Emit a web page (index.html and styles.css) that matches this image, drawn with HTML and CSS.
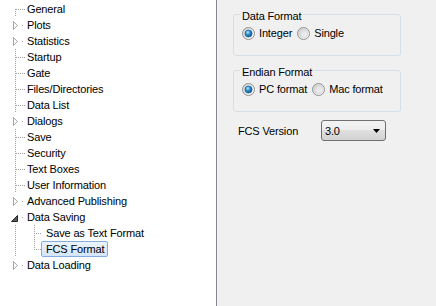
FILE: index.html
```html
<!DOCTYPE html>
<html>
<head>
<meta charset="utf-8">
<link rel="stylesheet" href="styles.css">
</head>
<body>
<svg class="defs" width="0" height="0" aria-hidden="true">
  <defs>
    <linearGradient id="rOuter" x1="0" y1="0" x2="1" y2="1">
      <stop offset="0" stop-color="#d2d2d2"/>
      <stop offset="1" stop-color="#ffffff"/>
    </linearGradient>
    <linearGradient id="rInner" x1="0" y1="0" x2="1" y2="1">
      <stop offset="0" stop-color="#d9d9d9"/>
      <stop offset="1" stop-color="#f7f7f7"/>
    </linearGradient>
    <radialGradient id="rDot" cx="0.4" cy="0.35" r="0.7">
      <stop offset="0" stop-color="#b9e6fb"/>
      <stop offset="0.45" stop-color="#2f8fd2"/>
      <stop offset="1" stop-color="#0d4a7e"/>
    </radialGradient>
    <symbol id="leafFirst" viewBox="0 0 19 16">
      <line x1="9.5" y1="8" x2="9.5" y2="16" stroke="#a0a0a0" stroke-dasharray="1 1"/>
      <line x1="10" y1="8.5" x2="19" y2="8.5" stroke="#a0a0a0" stroke-dasharray="1 1"/>
    </symbol>
    <symbol id="leaf" viewBox="0 0 19 16">
      <line x1="9.5" y1="0" x2="9.5" y2="16" stroke="#a0a0a0" stroke-dasharray="1 1"/>
      <line x1="10" y1="8.5" x2="19" y2="8.5" stroke="#a0a0a0" stroke-dasharray="1 1"/>
    </symbol>
    <symbol id="vline" viewBox="0 0 19 16">
      <line x1="9.5" y1="0" x2="9.5" y2="16" stroke="#a0a0a0" stroke-dasharray="1 1"/>
    </symbol>
    <symbol id="childFirst" viewBox="0 0 19 16">
      <line x1="9.5" y1="0" x2="9.5" y2="16" stroke="#a0a0a0" stroke-dasharray="1 1"/>
      <line x1="11" y1="8.5" x2="16" y2="8.5" stroke="#a0a0a0" stroke-dasharray="1 1"/>
    </symbol>
    <symbol id="childLast" viewBox="0 0 19 16">
      <line x1="9.5" y1="0" x2="9.5" y2="9" stroke="#a0a0a0" stroke-dasharray="1 1"/>
      <line x1="11" y1="8.5" x2="16" y2="8.5" stroke="#a0a0a0" stroke-dasharray="1 1"/>
    </symbol>
    <symbol id="collapsed" viewBox="0 0 19 16">
      <path d="M7.5 4.5 L11.5 8.5 L7.5 12.5 Z" fill="#ffffff" stroke="#a6a6a6"/>
      <rect x="16" y="8" width="1" height="1" fill="#a0a0a0"/>
    </symbol>
    <symbol id="expanded" viewBox="0 0 19 16">
      <path d="M11.5 6.5 L11.5 12.5 L5.5 12.5 Z" fill="#595959" stroke="#262626"/>
      <rect x="16" y="8" width="1" height="1" fill="#a0a0a0"/>
    </symbol>
    <symbol id="radioOn" viewBox="0 0 13 13">
      <circle cx="6.5" cy="6.5" r="6" fill="url(#rOuter)" stroke="#8e8f8f"/>
      <circle cx="6.5" cy="6.5" r="3.6" fill="url(#rDot)" stroke="#1a5b8c" stroke-width="0.6"/>
    </symbol>
    <symbol id="radioOff" viewBox="0 0 13 13">
      <circle cx="6.5" cy="6.5" r="6" fill="url(#rOuter)" stroke="#8e8f8f"/>
      <circle cx="6.5" cy="6.5" r="4" fill="url(#rInner)" stroke="#c4c4c4" stroke-width="0.6"/>
    </symbol>
  </defs>
</svg>
<div class="window">
  <div class="tree">
    <div class="row"><svg class="gut"><use href="#leafFirst"/></svg><span class="label">General</span></div>
    <div class="row"><svg class="gut"><use href="#collapsed"/></svg><span class="label">Plots</span></div>
    <div class="row"><svg class="gut"><use href="#collapsed"/></svg><span class="label">Statistics</span></div>
    <div class="row"><svg class="gut"><use href="#leaf"/></svg><span class="label">Startup</span></div>
    <div class="row"><svg class="gut"><use href="#leaf"/></svg><span class="label">Gate</span></div>
    <div class="row"><svg class="gut"><use href="#leaf"/></svg><span class="label">Files/Directories</span></div>
    <div class="row"><svg class="gut"><use href="#leaf"/></svg><span class="label">Data List</span></div>
    <div class="row"><svg class="gut"><use href="#collapsed"/></svg><span class="label">Dialogs</span></div>
    <div class="row"><svg class="gut"><use href="#leaf"/></svg><span class="label">Save</span></div>
    <div class="row"><svg class="gut"><use href="#leaf"/></svg><span class="label">Security</span></div>
    <div class="row"><svg class="gut"><use href="#leaf"/></svg><span class="label">Text Boxes</span></div>
    <div class="row"><svg class="gut"><use href="#leaf"/></svg><span class="label">User Information</span></div>
    <div class="row"><svg class="gut"><use href="#collapsed"/></svg><span class="label">Advanced Publishing</span></div>
    <div class="row"><svg class="gut"><use href="#expanded"/></svg><span class="label">Data Saving</span></div>
    <div class="row"><svg class="gut"><use href="#vline"/></svg><svg class="gut"><use href="#childFirst"/></svg><span class="label">Save as Text Format</span></div>
    <div class="row"><svg class="gut"><use href="#vline"/></svg><svg class="gut"><use href="#childLast"/></svg><span class="label sel">FCS Format</span></div>
    <div class="row"><svg class="gut"><use href="#collapsed"/></svg><span class="label">Data Loading</span></div>
  </div>
  <div class="panel">
    <div class="group">
      <div class="group-title">Data Format</div>
      <div class="radios">
        <span class="opt"><svg class="radio"><use href="#radioOn"/></svg><span>Integer</span></span>
        <span class="opt"><svg class="radio"><use href="#radioOff"/></svg><span>Single</span></span>
      </div>
    </div>
    <div class="group last">
      <div class="group-title">Endian Format</div>
      <div class="radios">
        <span class="opt"><svg class="radio"><use href="#radioOn"/></svg><span>PC format</span></span>
        <span class="opt"><svg class="radio"><use href="#radioOff"/></svg><span>Mac format</span></span>
      </div>
    </div>
    <div class="fcs-row">
      <span class="fcs-label">FCS Version</span>
      <div class="select">
        <span>3.0</span>
        <svg class="arrow" width="7" height="4" viewBox="0 0 7 4"><path d="M0 0 H7 L3.5 4 Z" fill="#000"/></svg>
      </div>
    </div>
  </div>
</div>
</body>
</html>
```
FILE: styles.css
```css
html, body {
  margin: 0;
  padding: 0;
}
body {
  background: #f0f0f0;
  font-family: "Liberation Sans", Arial, sans-serif;
  font-size: 11px;
  letter-spacing: -0.15px;
  color: #000;
}
.defs {
  display: block;
  width: 0;
  height: 0;
  overflow: hidden;
}
.window {
  display: flex;
  height: 306px;
}
.tree {
  box-sizing: border-box;
  width: 217px;
  height: 306px;
  background: #fff;
  border-right: 1px solid #828790;
  padding: 1px 0 0 6px;
  flex: none;
}
.row {
  display: flex;
  height: 16px;
}
.gut {
  display: block;
  width: 19px;
  height: 16px;
  flex: none;
}
.label {
  margin-left: -3px;
  padding: 0 3px 0 4px;
  border: 1px solid transparent;
  border-radius: 2px;
  line-height: 14px;
  white-space: nowrap;
}
.label.sel {
  background: linear-gradient(#ebf4fe, #d3e6fc);
  border-color: #84acdd;
}
.panel {
  flex: 1;
  padding: 14px 0 0 16px;
}
.group {
  box-sizing: border-box;
  width: 168px;
  height: 42px;
  border: 1px solid #d5dfe5;
  border-radius: 3px;
  padding: 0 0 0 8px;
  margin-bottom: 14px;
}
.group.last {
  margin-bottom: 8px;
}
.group-title {
  width: fit-content;
  margin: -6px 0 0 -2px;
  padding: 0 2px;
  line-height: 14px;
  background: #f0f0f0;
}
.radios {
  display: flex;
  align-items: center;
  height: 13px;
  margin-top: 4px;
}
.opt {
  display: flex;
  align-items: center;
  gap: 4px;
  margin-right: 5px;
  line-height: 13px;
}
.radio {
  display: block;
  width: 13px;
  height: 13px;
  flex: none;
}
.fcs-row {
  display: flex;
  align-items: center;
  margin-left: 5px;
}
.fcs-label {
  width: 83px;
  flex: none;
}
.select {
  box-sizing: border-box;
  width: 65px;
  height: 21px;
  border: 1px solid #707070;
  border-radius: 3px;
  background: linear-gradient(#f3f3f3 0%, #ececec 50%, #dfdfdf 50%, #d2d2d2 100%);
  display: flex;
  align-items: center;
  justify-content: space-between;
  padding: 0 5px 0 3px;
}
.arrow {
  display: block;
}
```
